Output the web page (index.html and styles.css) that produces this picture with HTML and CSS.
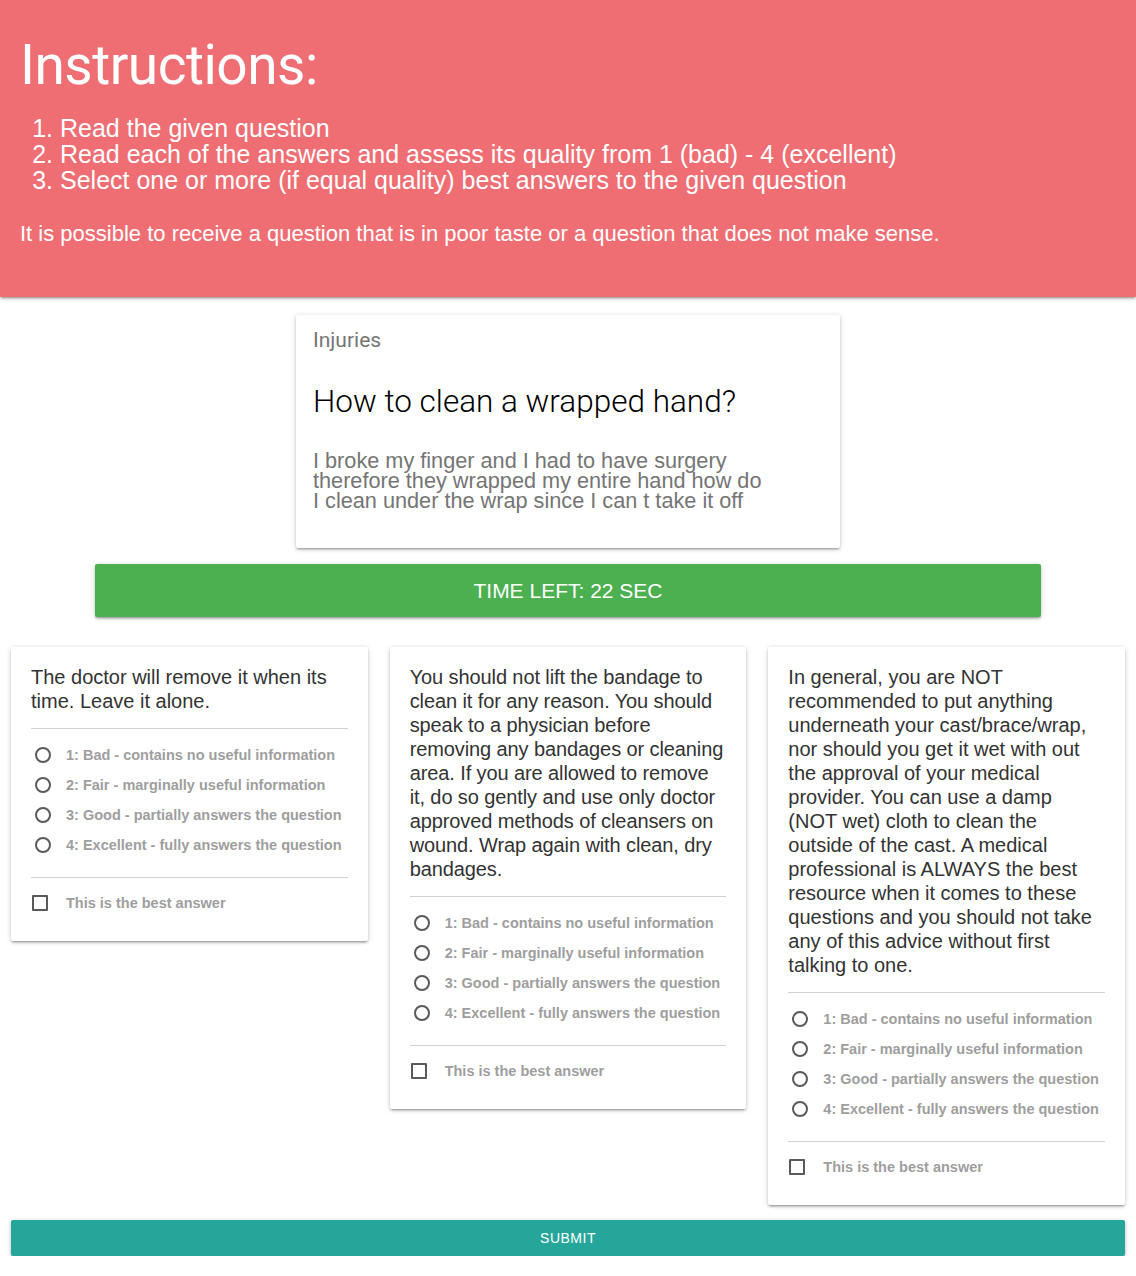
FILE: index.html
```html
<!DOCTYPE html>
<html lang="en">
<head>
<meta charset="utf-8">
<title>Answer quality</title>
<link rel="stylesheet" href="styles.css">
</head>
<body>
<header class="instructions">
  <h2 class="instructions-title">Instructions:</h2>
  <ol class="instructions-list">
    <li>Read the given question</li>
    <li>Read each of the answers and assess its quality from 1 (bad) - 4 (excellent)</li>
    <li>Select one or more (if equal quality) best answers to the given question</li>
  </ol>
  <p class="instructions-note">It is possible to receive a question that is in poor taste or a question that does not make sense.</p>
</header>

<main class="main">
  <section class="question-card">
    <div class="question-category">Injuries</div>
    <h4 class="question-title">How to clean a wrapped hand?</h4>
    <p class="question-body">I broke my finger and I had to have surgery<br>therefore they wrapped my entire hand how do<br>I clean under the wrap since I can t take it off</p>
  </section>

  <div class="timer">TIME LEFT: 22 SEC</div>

  <div class="answers">
    <article class="answer-card">
      <p class="answer-text">The doctor will remove it when its time. Leave it alone.</p>
      <div class="divider divider-top"></div>
      <ul class="ratings">
        <li class="rating"><span class="radio"></span><span class="rating-label">1: Bad - contains no useful information</span></li>
        <li class="rating"><span class="radio"></span><span class="rating-label">2: Fair - marginally useful information</span></li>
        <li class="rating"><span class="radio"></span><span class="rating-label">3: Good - partially answers the question</span></li>
        <li class="rating"><span class="radio"></span><span class="rating-label">4: Excellent - fully answers the question</span></li>
      </ul>
      <div class="divider divider-bottom"></div>
      <div class="best"><span class="checkbox"></span><span class="best-label">This is the best answer</span></div>
    </article>

    <article class="answer-card">
      <p class="answer-text answer-text--tight">You should not lift the bandage to clean it for any reason. You should speak to a physician before removing any bandages or cleaning area. If you are allowed to remove it, do so gently and use only doctor approved methods of cleansers on wound. Wrap again with clean, dry bandages.</p>
      <div class="divider divider-top"></div>
      <ul class="ratings">
        <li class="rating"><span class="radio"></span><span class="rating-label">1: Bad - contains no useful information</span></li>
        <li class="rating"><span class="radio"></span><span class="rating-label">2: Fair - marginally useful information</span></li>
        <li class="rating"><span class="radio"></span><span class="rating-label">3: Good - partially answers the question</span></li>
        <li class="rating"><span class="radio"></span><span class="rating-label">4: Excellent - fully answers the question</span></li>
      </ul>
      <div class="divider divider-bottom"></div>
      <div class="best"><span class="checkbox"></span><span class="best-label">This is the best answer</span></div>
    </article>

    <article class="answer-card">
      <p class="answer-text">In general, you are NOT recommended to put anything underneath your cast/brace/wrap, nor should you get it wet with out the approval of your medical provider. You can use a damp (NOT wet) cloth to clean the outside of the cast. A medical professional is ALWAYS the best resource when it comes to these questions and you should not take any of this advice without first talking to one.</p>
      <div class="divider divider-top"></div>
      <ul class="ratings">
        <li class="rating"><span class="radio"></span><span class="rating-label">1: Bad - contains no useful information</span></li>
        <li class="rating"><span class="radio"></span><span class="rating-label">2: Fair - marginally useful information</span></li>
        <li class="rating"><span class="radio"></span><span class="rating-label">3: Good - partially answers the question</span></li>
        <li class="rating"><span class="radio"></span><span class="rating-label">4: Excellent - fully answers the question</span></li>
      </ul>
      <div class="divider divider-bottom"></div>
      <div class="best"><span class="checkbox"></span><span class="best-label">This is the best answer</span></div>
    </article>
  </div>

  <button class="submit" type="button">SUBMIT</button>
</main>
</body>
</html>
```

FILE: styles.css
```css
* { box-sizing: border-box; }

html, body {
  margin: 0;
  padding: 0;
  background: #ffffff;
  font-family: "Liberation Sans", Arial, Helvetica, sans-serif;
}

.instructions {
  background: #ef6e73;
  color: #ffffff;
  padding: 34px 20px 51px;
  box-shadow: 0 2px 2px 0 rgba(0,0,0,0.14), 0 3px 1px -2px rgba(0,0,0,0.12), 0 1px 5px 0 rgba(0,0,0,0.2);
}

.instructions-title {
  font-family: Roboto, "Liberation Sans", sans-serif;
  font-weight: 400;
  font-size: 55px;
  line-height: 63px;
  margin: 0 0 18px;
  letter-spacing: -0.5px;
}

.instructions-list {
  margin: 0;
  padding-left: 40px;
  font-size: 25px;
  line-height: 26px;
}

.instructions-note {
  margin: 29px 0 0;
  font-size: 22px;
  line-height: 24px;
}

.main {
  padding: 18px 11px 0;
}

.question-card,
.timer,
.answer-card,
.submit {
  box-shadow: 0 2px 2px 0 rgba(0,0,0,0.14), 0 3px 1px -2px rgba(0,0,0,0.12), 0 1px 5px 0 rgba(0,0,0,0.2);
}

.question-card {
  width: 544px;
  margin: 0 auto;
  background: #ffffff;
  border-radius: 2px;
  padding: 13px 17px 37px;
}

.question-category {
  font-family: Roboto, "Liberation Sans", sans-serif;
  font-size: 21px;
  line-height: 24px;
  color: #757575;
}

.question-title {
  font-family: Roboto, "Liberation Sans", sans-serif;
  font-weight: 300;
  font-size: 31.5px;
  line-height: 34px;
  color: #000000;
  margin: 33px 0 0;
}

.question-body {
  margin: 32px 0 0;
  font-size: 21.7px;
  line-height: 20px;
  color: #757575;
  white-space: nowrap;
}

.timer {
  width: 946px;
  margin: 16px auto 0;
  height: 53px;
  background: #4caf50;
  color: #ffffff;
  font-size: 21px;
  line-height: 53px;
  text-align: center;
  border-radius: 2px;
}

.answers {
  margin-top: 30px;
  display: grid;
  grid-template-columns: 1fr 1fr 1fr;
  gap: 22px;
  align-items: start;
}

.answer-card {
  background: #ffffff;
  border-radius: 2px;
  padding: 18px 20px 30px;
}

.answer-text {
  margin: 0;
  font-size: 20px;
  line-height: 24px;
  color: #333333;
}

.answer-text--tight { letter-spacing: -0.1px; }

.divider {
  height: 1px;
  background: #d2d2d2;
}

.divider-top { margin: 15px 0 11px; }
.divider-bottom { margin: 17px 0 17px; }

.ratings {
  list-style: none;
  margin: 0;
  padding: 0;
}

.rating {
  display: flex;
  align-items: center;
  height: 30px;
}

.radio {
  width: 16px;
  height: 16px;
  border: 2px solid #5a5a5a;
  border-radius: 50%;
  margin-left: 4px;
  flex: 0 0 auto;
}

.rating-label,
.best-label {
  font-size: 14.5px;
  font-weight: 700;
  color: #9e9e9e;
  white-space: nowrap;
}

.rating-label { margin-left: 15px; }

.best {
  display: flex;
  align-items: center;
  height: 16px;
}

.checkbox {
  width: 16px;
  height: 16px;
  border: 2px solid #5a5a5a;
  border-radius: 1px;
  margin-left: 1px;
  flex: 0 0 auto;
}

.best-label { margin-left: 18px; }

.submit {
  display: block;
  width: 100%;
  margin-top: 15px;
  height: 36px;
  border: none;
  border-radius: 2px;
  background: #26a69a;
  color: #ffffff;
  font-family: "Liberation Sans", Arial, sans-serif;
  font-size: 14px;
  letter-spacing: 0.5px;
  padding: 0;
}
```
